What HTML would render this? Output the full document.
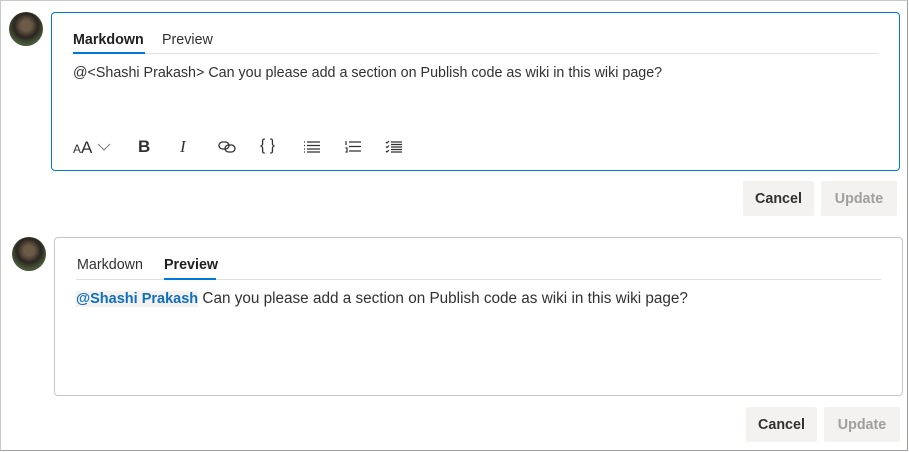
<!DOCTYPE html>
<html><head><style>
*{box-sizing:border-box;margin:0;padding:0}
body{width:909px;height:452px;background:#fff;font-family:"Liberation Sans",sans-serif;font-size:14.3px;color:#323130;position:relative;overflow:hidden}
.frame{position:absolute;left:0;top:0;width:908px;height:451px;border:1px solid #c8c8c8;border-right-color:#a0a0a0;border-bottom-color:#a0a0a0}
.av{position:absolute;width:34px;height:34px;border-radius:50%;background:radial-gradient(circle at 50% 40%,#6b5a45 0 20%,#2a2520 45%,#4a5a3a 70%,#222 100%)}
.box{position:absolute;border-radius:4px}
.abs{position:absolute;white-space:nowrap}
.ul{position:absolute;height:2px;background:#0078d4}
.sep{position:absolute;height:1px;background:#e1dfdd}
.btn{position:absolute;height:35px;background:#f3f2f1;border-radius:2px;font-weight:bold;text-align:center;line-height:37px;font-size:14.3px}
.dis{color:#a19f9d}
.ic{position:absolute;top:138px}
.ment{background:#f3f2f1;color:#106ebe;font-weight:bold;font-size:14.5px}
</style></head><body>
<div class="frame"></div>
<div class="av" style="left:9px;top:12px"></div>
<div class="box" style="left:51px;top:12px;width:849px;height:159px;border:1.5px solid #0078d4"></div>
<div class="abs" style="left:73px;top:32px;font-weight:bold;color:#201f1e">Markdown</div>
<div class="abs" style="left:162px;top:32px">Preview</div>
<div class="sep" style="left:73px;top:53px;width:805px"></div>
<div class="ul" style="left:73px;top:52px;width:72px"></div>
<div class="abs" style="left:73px;top:65px">@&lt;Shashi Prakash&gt; Can you please add a section on Publish code as wiki in this wiki page?</div>
<div class="abs" style="left:73px;top:138px;font-size:17px"><span style="font-size:12px">A</span>A</div>
<svg class="ic" style="left:97px;top:143px" width="14" height="8"><path d="M1 1l6 6 6-6" fill="none" stroke="#8a8886" stroke-width="1.2"/></svg>
<div class="abs" style="left:138px;top:137px;font-weight:bold;font-size:17px">B</div>
<div class="abs" style="left:180px;top:137px;font-style:italic;font-size:17px;font-family:'Liberation Serif',serif">I</div>
<svg class="ic" style="left:218px;top:140px" width="19" height="14"><g fill="none" stroke="#323130" stroke-width="1.3"><rect x="1" y="2" width="10" height="7" rx="3.5"/><rect x="7" y="5" width="10" height="7" rx="3.5"/></g></svg>
<div class="abs" style="left:260px;top:137px;font-size:16px">{ }</div>
<svg class="ic" style="left:303px;top:141px" width="18" height="12"><g stroke="#323130" stroke-width="1.2"><path d="M1 1h1M1 4.5h1M1 8h1M1 11h1M4 1h13M4 4.5h13M4 8h13M4 11h13"/></g></svg>
<svg class="ic" style="left:344px;top:140px" width="18" height="13"><g stroke="#323130" stroke-width="1.2"><path d="M2 1v4M1.5 8h1.5v4h-1.5M5 2h12M5 6.5h12M5 11h12" fill="none"/></g></svg>
<svg class="ic" style="left:385px;top:140px" width="18" height="13"><g stroke="#323130" stroke-width="1.2" fill="none"><path d="M1 2l1 1 2-2M1 6.5l1 1 2-2M1 11l1 1 2-2M6 2h11M6 4.5h11M6 7h11M6 9.5h11M6 12h11"/></g></svg>
<div class="btn" style="left:743px;top:181px;width:71px">Cancel</div>
<div class="btn dis" style="left:821px;top:181px;width:76px">Update</div>

<div class="av" style="left:12px;top:237px"></div>
<div class="box" style="left:54px;top:237px;width:849px;height:159px;border:1px solid #c8c6c4"></div>
<div class="abs" style="left:77px;top:257px">Markdown</div>
<div class="abs" style="left:164px;top:257px;font-weight:bold;color:#201f1e">Preview</div>
<div class="sep" style="left:76px;top:279px;width:805px"></div>
<div class="ul" style="left:164px;top:278px;width:52px"></div>
<div class="abs" style="left:76px;top:290px;font-size:15.3px"><span class="ment">@Shashi Prakash</span> Can you please add a section on Publish code as wiki in this wiki page?</div>
<div class="btn" style="left:746px;top:407px;width:71px">Cancel</div>
<div class="btn dis" style="left:824px;top:407px;width:76px">Update</div>
</body></html>
